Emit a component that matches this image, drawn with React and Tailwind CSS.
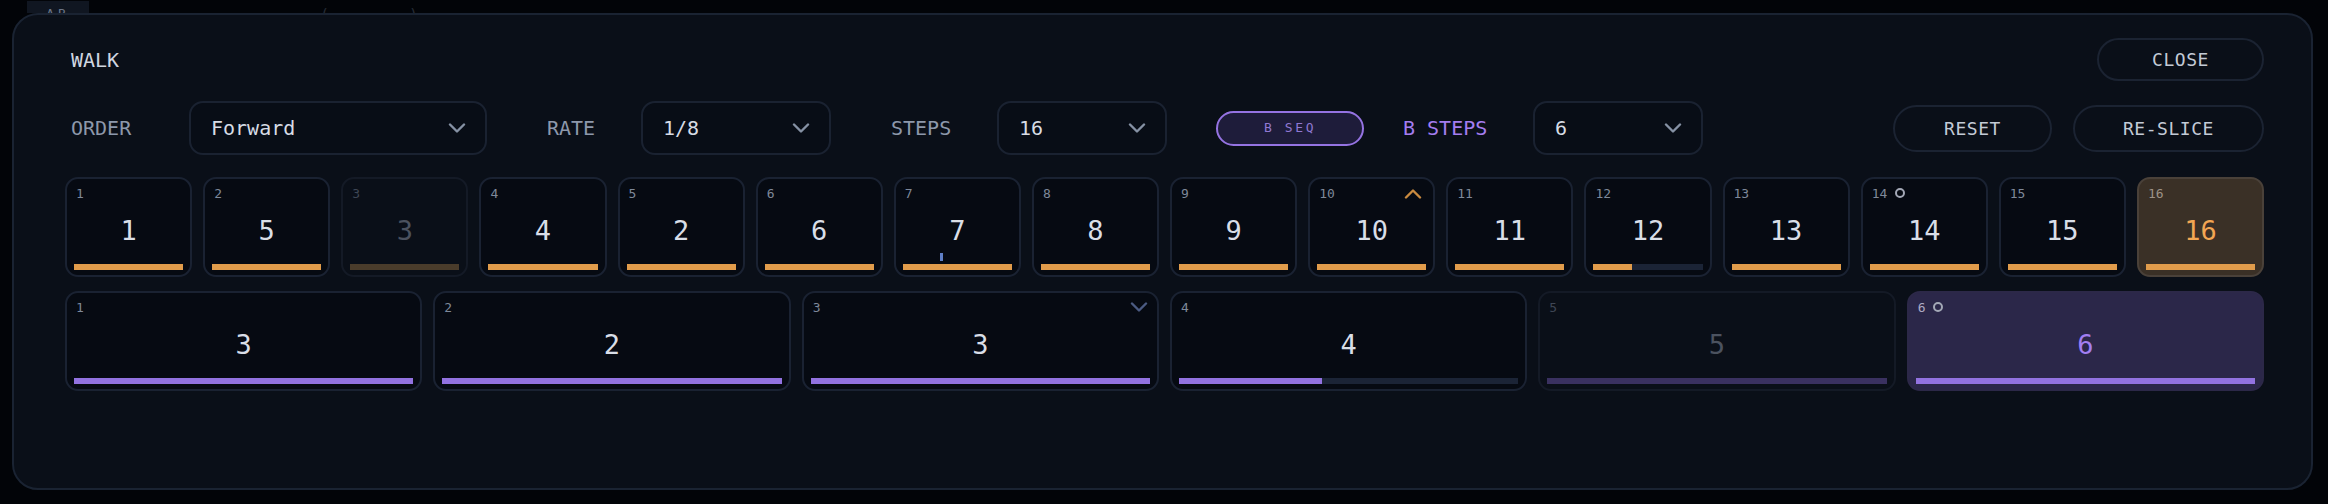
import React from "react";

const mono = { fontFamily: '"DejaVu Sans Mono", "Liberation Mono", monospace' };

const stepsA = [
  { n: 1, v: 1 },
  { n: 2, v: 5 },
  { n: 3, v: 3, dim: true },
  { n: 4, v: 4 },
  { n: 5, v: 2 },
  { n: 6, v: 6 },
  { n: 7, v: 7, tick: true },
  { n: 8, v: 8 },
  { n: 9, v: 9 },
  { n: 10, v: 10, up: true },
  { n: 11, v: 11 },
  { n: 12, v: 12, fill: 35 },
  { n: 13, v: 13 },
  { n: 14, v: 14, ring: true },
  { n: 15, v: 15 },
  { n: 16, v: 16, active: true },
];

const stepsB = [
  { n: 1, v: 3 },
  { n: 2, v: 2 },
  { n: 3, v: 3, down: true },
  { n: 4, v: 4, fill: 42 },
  { n: 5, v: 5, dim: true },
  { n: 6, v: 6, active: true, ring: true },
];

const Chevron = ({ up, className }) => (
  <svg width="18" height="11" viewBox="0 0 18 11" className={className}>
    <polyline
      points={up ? "2,9.5 9,2.5 16,9.5" : "2,1.5 9,8.5 16,1.5"}
      fill="none"
      stroke="currentColor"
      strokeWidth="2.4"
      strokeLinecap="round"
      strokeLinejoin="round"
    />
  </svg>
);

const Ring = () => (
  <span className="ml-[8px] inline-block h-[10px] w-[10px] rounded-full border-2 border-[#a3a8b6]" />
);

const Select = ({ value, width }) => (
  <div
    className={`flex h-[54px] items-center justify-between rounded-[14px] border-2 border-[#1a2231] bg-[#080d16] pl-[20px] pr-[19px] ${width}`}
  >
    <span className="text-[20px] text-[#d7dce5]">{value}</span>
    <Chevron className="text-[#8591a4]" />
  </div>
);

const PillButton = ({ label, width, height }) => (
  <button
    type="button"
    className={`flex items-center justify-center rounded-full border-2 border-[#1b2332] bg-[#0a0f18] text-[18px] tracking-[0.03em] text-[#c3cad6] ${width} ${height}`}
  >
    {label}
  </button>
);

const Tile = ({ s, accent }) => {
  const amber = accent === "amber";
  let box = "border-2 border-[#1a2232] bg-[#060a12]";
  let num = "text-[#d9dee7]";
  let lab = "text-[#7e8899]";
  let bar = amber ? "bg-[#e19c4b]" : "bg-[#9272e0]";
  if (s.dim) {
    box = "border-2 border-[#141a26] bg-[#0a0f18]";
    num = "text-[#4b525f]";
    lab = "text-[#3e4654]";
    bar = amber ? "bg-[#4a3c2b]" : "bg-[#3a3160]";
  }
  if (s.active) {
    box = amber
      ? "border-2 border-[#4a4139] bg-[#3a3026]"
      : "border-2 border-[#2c2848] bg-[#2b2749]";
    num = amber ? "text-[#f2a653]" : "text-[#a27ff2]";
    lab = amber ? "text-[#9d9286]" : "text-[#aeaac4]";
  }
  return (
    <div className={`relative flex h-[100px] flex-col rounded-[13px] px-[7px] pb-[5px] pt-[6px] ${box}`}>
      <div className="flex h-[16px] items-center justify-between pl-[2px]">
        <span className={`flex items-center text-[13px] leading-none ${lab}`}>
          {s.n}
          {s.ring && <Ring />}
        </span>
        {s.up && <Chevron up className="mr-[4px] text-[#c98a3f]" />}
        {s.down && <Chevron className="mr-[2px] text-[#4b5b82]" />}
      </div>
      <div className={`flex flex-1 items-center justify-center pb-[4px] text-[27px] leading-none ${num}`}>
        {s.v}
      </div>
      {s.tick && (
        <span className="absolute bottom-[14px] left-[44px] h-[8px] w-[3px] bg-[#5f7fc6]" />
      )}
      <div className="h-[6px] w-full bg-[#1b2436]">
        <div className={`h-full ${bar}`} style={{ width: `${s.fill ?? 100}%` }} />
      </div>
    </div>
  );
};

export default function App() {
  return (
    <div className="h-[504px] w-[2328px] overflow-hidden bg-[#020408]" style={mono}>
      <div className="flex h-[13px] items-end overflow-hidden pl-[27px]">
        <div className="flex h-[12px] w-[62px] items-end justify-center overflow-hidden bg-[#101621]">
          <span className="mb-[-7px] text-[13px] leading-none tracking-[0.3em] text-[#6b7587]">AB</span>
        </div>
        <span className="mb-[-10px] ml-[231px] text-[15px] leading-none text-[#262c36]">(</span>
        <span className="mb-[-10px] ml-[80px] text-[15px] leading-none text-[#262c36]">)</span>
      </div>
      <div className="ml-[12px] mr-[15px] h-[477px] rounded-[26px] border-2 border-[#1a2332] bg-[#0a0f18] pl-[51px] pr-[47px] pt-[23px]">
        <div className="flex h-[43px] items-center justify-between">
          <span className="pl-[6px] text-[20px] text-[#d0d6e0]">WALK</span>
          <PillButton label="CLOSE" width="w-[167px]" height="h-[43px]" />
        </div>

        <div className="mt-[20px] flex h-[54px] items-center pl-[6px]">
          <span className="w-[118px] text-[20px] text-[#8d98ab]">ORDER</span>
          <Select value="Forward" width="w-[298px]" />
          <span className="ml-[60px] w-[94px] text-[20px] text-[#8d98ab]">RATE</span>
          <Select value="1/8" width="w-[190px]" />
          <span className="ml-[60px] w-[106px] text-[20px] text-[#8d98ab]">STEPS</span>
          <Select value="16" width="w-[170px]" />
          <button
            type="button"
            className="ml-[49px] flex h-[35px] w-[148px] items-center justify-center rounded-full border-2 border-[#9573e2] bg-[#1e1c3a] text-[13px] tracking-[0.2em] text-[#9078d2]"
          >
            B SEQ
          </button>
          <span className="ml-[39px] w-[130px] text-[20px] text-[#a47df0]">B STEPS</span>
          <Select value="6" width="w-[170px]" />
          <div className="flex-1" />
          <PillButton label="RESET" width="w-[159px]" height="h-[47px]" />
          <div className="w-[21px]" />
          <PillButton label="RE-SLICE" width="w-[191px]" height="h-[47px]" />
        </div>

        <div className="mt-[22px] grid grid-cols-16 gap-[11px]">
          {stepsA.map((s) => (
            <Tile key={s.n} s={s} accent="amber" />
          ))}
        </div>

        <div className="mt-[14px] grid grid-cols-6 gap-[11px]">
          {stepsB.map((s) => (
            <Tile key={s.n} s={s} accent="violet" />
          ))}
        </div>
      </div>
    </div>
  );
}
